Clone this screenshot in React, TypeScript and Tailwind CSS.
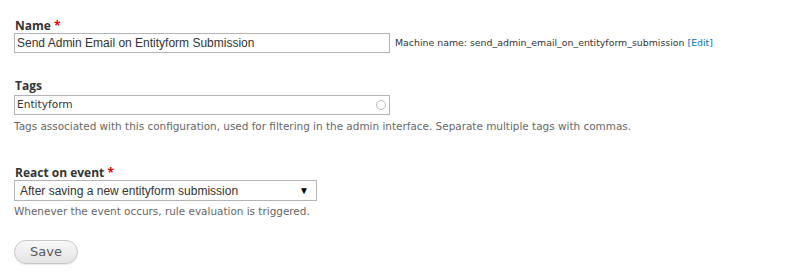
export default function App() {
  return (
    <div className="w-[787px] h-[277px] bg-white pl-[14px] pt-[17px] font-['DejaVu_Sans',sans-serif] text-[#333]">
      {/* Name */}
      <div>
        <label className="block font-['Open_Sans',sans-serif] text-[12px] font-bold leading-[15px] pl-px pt-[1px]">
          Name <span className="text-[#e00]">*</span>
        </label>
        <div className="flex items-center">
          <div className="w-[376px] h-[20px] border border-[#b4b4b4] flex items-center pl-[2px] font-['Liberation_Sans',sans-serif] text-[12px] text-[#333]">
            Send Admin Email on Entityform Submission
          </div>
          <span className="ml-[5px] text-[9.4px] text-[#333]">
            Machine name: send_admin_email_on_entityform_submission{" "}
            <a className="text-[#0074bd]">[Edit]</a>
          </span>
        </div>
      </div>

      {/* Tags */}
      <div className="mt-[25px]">
        <label className="block font-['Open_Sans',sans-serif] text-[12px] font-bold leading-[15px] pl-px">Tags</label>
        <div className="relative w-[376px] h-[20px] border border-[#b4b4b4] flex items-center pl-[2px] text-[10.6px] text-[#333] mt-[2px]">
          Entityform
          <span className="absolute right-[3px] top-[4px] w-[10px] h-[10px] rounded-full border border-[#bbb]" />
        </div>
        <p className="text-[10.45px] text-[#666] leading-[13px] mt-[5px]">
          Tags associated with this configuration, used for filtering in the admin interface. Separate multiple tags with commas.
        </p>
      </div>

      {/* React on event */}
      <div className="mt-[32px]">
        <label className="block font-['Open_Sans',sans-serif] text-[12px] font-bold leading-[15px] pl-px">
          React on event <span className="text-[#e00]">*</span>
        </label>
        <div className="w-[303px] h-[21px] border border-[#b4b4b4] flex items-center justify-between pl-[5px] pr-[7px] font-['Liberation_Sans',sans-serif] text-[12px] text-[#333]">
          <span>After saving a new entityform submission</span>
          <span className="text-[10px] text-black">▼</span>
        </div>
        <p className="text-[10.45px] text-[#666] leading-[13px] mt-[4px]">
          Whenever the event occurs, rule evaluation is triggered.
        </p>
      </div>

      {/* Save */}
      <button className="mt-[22px] w-[64px] h-[24px] rounded-full border border-[#c8c8c8] bg-gradient-to-b from-[#f8f8f8] to-[#e4e4e4] text-[13px] text-[#5a5a5a] shadow-[0_1px_1px_rgba(0,0,0,0.08)]">
        Save
      </button>
    </div>
  );
}
